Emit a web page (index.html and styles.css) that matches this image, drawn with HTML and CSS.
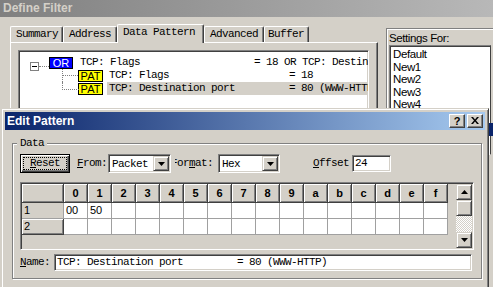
FILE: index.html
```html
<!DOCTYPE html>
<html>
<head>
<meta charset="utf-8">
<title>Define Filter</title>
<link rel="stylesheet" href="styles.css">
</head>
<body>
<div class="win">
  <div class="wtitle">Define Filter</div>
  <div class="wbody">
    <div class="tabarea">
      <div class="tabs">
        <div class="tab t-sum">Summary</div>
        <div class="tab t-addr">Address</div>
        <div class="tab t-data sel">Data Pattern</div>
        <div class="tab t-adv">Advanced</div>
        <div class="tab t-buf">Buffer</div>
      </div>
      <div class="panel">
        <div class="tree">
          <div class="trow r1"><span class="minus"></span><span class="dots"></span><span class="tag or">OR</span><span class="txt">TCP: Flags                   = 18 OR TCP: Destination port</span></div>
          <div class="trow r2"><span class="tag pat">PAT</span><span class="txt">TCP: Flags                    = 18</span></div>
          <div class="trow r3"><span class="tag pat">PAT</span><span class="txt hl">TCP: Destination port         = 80 (WWW-HTTP)</span></div>
        </div>
      </div>
    </div>
    <div class="settings">
      <div class="slabel">Settings For:</div>
      <div class="list">
        <div class="item">Default</div>
        <div class="item">New1</div>
        <div class="item">New2</div>
        <div class="item">New3</div>
        <div class="item">New4</div>
        <div class="item">New5</div>
        <div class="item selitem">New6</div>
      </div>
    </div>
  </div>
</div>

<div class="dialog">
  <div class="dtitle">
    <span class="dtext">Edit Pattern</span>
    <span class="cbtn help">?</span>
    <span class="cbtn close"><svg width="8" height="7" viewBox="0 0 8 7"><path d="M0 0h2l2 2.5L6 0h2L5 3.5 8 7H6L4 4.5 2 7H0l3-3.5z" fill="#000"/></svg></span>
  </div>
  <fieldset class="group">
    <legend>Data</legend>
    <div class="ctrls">
      <div class="btn-reset"><span class="focus"><u>R</u>eset</span></div>
      <span class="lbl l-from"><u>F</u>rom:</span>
      <div class="combo c-packet"><span class="ctext">Packet</span><span class="dd"><svg width="7" height="4" viewBox="0 0 7 4"><path d="M0 0h7L3.5 4z" fill="#000"/></svg></span></div>
      <span class="lbl l-format"><span class="clip">For<u>m</u>at:</span></span>
      <div class="combo c-hex"><span class="ctext">Hex</span><span class="dd"><svg width="7" height="4" viewBox="0 0 7 4"><path d="M0 0h7L3.5 4z" fill="#000"/></svg></span></div>
      <span class="lbl l-offset"><u>O</u>ffset</span>
      <div class="edit e-offset">24</div>
    </div>
    <div class="grid">
      <div class="cells">
        <div class="hc corner"></div>
        <div class="hc">0</div><div class="hc">1</div><div class="hc">2</div><div class="hc">3</div>
        <div class="hc">4</div><div class="hc">5</div><div class="hc">6</div><div class="hc">7</div>
        <div class="hc">8</div><div class="hc">9</div><div class="hc">a</div><div class="hc">b</div>
        <div class="hc">c</div><div class="hc">d</div><div class="hc">e</div><div class="hc">f</div>

        <div class="rh cur">1</div>
        <div class="dc">00</div><div class="dc">50</div><div class="dc"></div><div class="dc"></div>
        <div class="dc"></div><div class="dc"></div><div class="dc"></div><div class="dc"></div>
        <div class="dc"></div><div class="dc"></div><div class="dc"></div><div class="dc"></div>
        <div class="dc"></div><div class="dc"></div><div class="dc"></div><div class="dc"></div>

        <div class="rh">2</div>
        <div class="dc"></div><div class="dc"></div><div class="dc"></div><div class="dc"></div>
        <div class="dc"></div><div class="dc"></div><div class="dc"></div><div class="dc"></div>
        <div class="dc"></div><div class="dc"></div><div class="dc"></div><div class="dc"></div>
        <div class="dc"></div><div class="dc"></div><div class="dc"></div><div class="dc"></div>
      </div>
      <div class="gfill"></div>
      <div class="vscroll">
        <div class="sbtn"><svg width="7" height="4" viewBox="0 0 7 4"><path d="M0 4h7L3.5 0z" fill="#000"/></svg></div>
        <div class="sthumb"></div>
        <div class="strack"></div>
        <div class="sbtn"><svg width="7" height="4" viewBox="0 0 7 4"><path d="M0 0h7L3.5 4z" fill="#000"/></svg></div>
      </div>
    </div>
    <div class="namerow">
      <span class="lbl l-name"><u>N</u>ame:</span>
      <div class="edit e-name">TCP: Destination port         = 80 (WWW-HTTP)</div>
    </div>
  </fieldset>
</div>
</body>
</html>
```

FILE: styles.css
```css
* { box-sizing: border-box; }
html, body { margin: 0; padding: 0; }
body {
  width: 493px;
  height: 287px;
  overflow: hidden;
  position: relative;
  background: #d4d0c8;
  font-family: "Liberation Mono", monospace;
  font-size: 11px;
  letter-spacing: -0.6px;
  color: #000;
}
u { text-decoration: underline; text-underline-offset: 1px; }

/* background window */
.win { height: 287px; display: flex; flex-direction: column; }
.wtitle {
  height: 17px; flex: none;
  background: linear-gradient(to right, #808080, #b8b8b8);
  color: #d4d0c8;
  font: bold 12px/17px "Liberation Sans", sans-serif;
  letter-spacing: 0;
  padding-left: 3px;
}
.wbody { display: flex; flex: 1; padding-left: 10px; }
.tabarea { width: 368px; flex: none; display: flex; flex-direction: column; padding-top: 7px; }
.tabs { display: flex; align-items: flex-end; height: 18px; position: relative; z-index: 1; }
.tab {
  height: 16px;
  border: 1px solid;
  border-color: #fff #404040 transparent #fff;
  border-bottom: none;
  border-radius: 2px 2px 0 0;
  box-shadow: inset -1px 0 #808080;
  background: #d4d0c8;
  line-height: 14px;
  white-space: pre;
}
.t-sum { padding: 0 4px 0 5px; }
.t-addr { padding: 0 5px 0 5px; }
.t-data { padding: 0 8px 0 5px; }
.t-adv { padding: 0 5px 0 5px; }
.t-buf { padding: 0 4px 0 3px; }
.tab.sel { height: 19px; margin-bottom: -1px; }

.panel {
  flex: 1;
  border-top: 1px solid #fff;
  border-left: 1px solid #fff;
  border-right: 1px solid #404040;
  box-shadow: inset -1px 0 #808080;
  padding: 7px 0 0 7px;
}
.tree {
  width: 351px;
  height: 90px;
  background: #fff;
  border: 1px solid;
  border-color: #808080 #fff #fff #808080;
  box-shadow: inset 1px 1px #404040, inset -1px -1px #d4d0c8;
  padding: 5px 0 0 11px;
  overflow: hidden;
}
.trow { display: flex; height: 13px; line-height: 13px; white-space: pre; position: relative; }
.minus {
  width: 9px; height: 9px; margin-top: 6px; flex: none;
  border: 1px solid #808080; background: #fff; position: relative;
}
.minus::after { content: ""; position: absolute; left: 1px; top: 3px; width: 5px; height: 1px; background: #000; }
.dots { width: 10px; height: 0; margin-top: 10px; border-top: 1px dotted #808080; flex: none; }
.tag {
  flex: none; height: 12px; margin-top: 1px;
  border: 1px solid #000;
  font: 11px/10px "Liberation Sans", sans-serif;
  letter-spacing: 0;
  text-align: center;
}
.or { width: 24px; background: #0000ff; color: #fff; }
.pat { width: 25px; background: #ffff00; color: #000; }
.r1 .txt { margin-left: 7px; }
.r2, .r3 { padding-left: 48px; }
.r2 .txt { margin-left: 6px; }
.r3 .txt { margin-left: 4px; padding-left: 2px; flex: 1; }
.hl { background: #d4d0c8; }
.r2::before {
  content: ""; position: absolute; left: 32px; top: 0; height: 13px;
  border-left: 1px dotted #808080;
}
.r2::after {
  content: ""; position: absolute; left: 33px; top: 6px; width: 15px;
  border-top: 1px dotted #808080;
}
.r3::before {
  content: ""; position: absolute; left: 32px; top: 0; height: 7px; width: 16px;
  border-left: 1px dotted #808080; border-bottom: 1px dotted #808080;
}

.settings {
  flex: 1;
  margin: 11px 0 0 8px;
  border-top: 1px solid #808080;
  border-left: 1px solid #808080;
  box-shadow: inset 1px 1px #fff;
  padding: 2px 0 0 2px;
  font-family: "Liberation Sans", sans-serif;
  font-size: 11.5px;
  letter-spacing: -0.4px;
}
.slabel { line-height: 14px; height: 14px; white-space: nowrap; }
.list {
  width: 102px;
  height: 110px;
  background: #fff;
  border: 1px solid;
  border-color: #808080 #404040 #fff #808080;
  box-shadow: inset 1px 1px #404040;
  padding: 2px 0 0 2px;
}
.item { line-height: 12.5px; height: 12.5px; padding-left: 1px; white-space: nowrap; }
.selitem { background: #0a246a; color: #fff; width: 110px; }

/* dialog */
.dialog {
  position: absolute;
  left: 1px; top: 108px;
  width: 488px; height: 190px;
  background: #d4d0c8;
  border: 1px solid;
  border-color: #d4d0c8 #404040 #404040 #d4d0c8;
  box-shadow: inset 1px 1px #fff, inset -1px -1px #808080;
  padding: 3px;
  display: flex; flex-direction: column;
}
.dtitle {
  height: 18px; flex: none;
  background: linear-gradient(to right, #0a246a, #a6caf0);
  display: flex; align-items: center;
  padding: 0 2px;
  color: #fff;
  font: bold 12px "Liberation Sans", sans-serif;
  letter-spacing: 0;
}
.dtext { flex: 1; }
.cbtn {
  width: 16px; height: 14px; margin-left: 2px;
  background: #d4d0c8;
  border: 1px solid;
  border-color: #fff #404040 #404040 #fff;
  box-shadow: inset -1px -1px #808080;
  display: flex; align-items: center; justify-content: center;
  color: #000;
  font: bold 11px "Liberation Sans", sans-serif;
}
.close svg { display: block; margin-top: -1px; }

.group {
  margin: 7px 3px 0 7px;
  padding: 0 6px 7px 7px;
  border: 1px solid #808080;
  box-shadow: inset 1px 1px #fff, 1px 1px #fff;
  min-width: 0;
}
.group legend {
  padding: 0 3px;
  margin-left: -3px;
  line-height: 13px;
  background: #d4d0c8;
}
.ctrls { display: flex; align-items: center; height: 19px; margin-top: 4px; white-space: pre; }
.btn-reset {
  width: 50px; height: 19px; flex: none;
  border: 1px solid #000;
  box-shadow: inset 1px 1px #fff, inset -1px -1px #404040, inset -2px -2px #808080;
  padding: 2px;
  display: flex;
}
.focus {
  flex: 1;
  border: 1px dotted #000;
  display: flex; align-items: center; justify-content: center;
  line-height: 11px;
}
.lbl { flex: none; line-height: 13px; }
.l-from { margin-left: 7px; width: 30px; }
.combo {
  height: 19px; flex: none;
  background: #fff;
  border: 1px solid;
  border-color: #808080 #fff #fff #808080;
  box-shadow: inset 1px 1px #404040, inset -1px -1px #d4d0c8;
  padding: 1px;
  display: flex; align-items: stretch;
}
.ctext { flex: 1; padding-left: 2px; line-height: 15px; margin-top: 1px; }
.dd {
  width: 16px; flex: none;
  background: #d4d0c8;
  border: 1px solid;
  border-color: #d4d0c8 #404040 #404040 #d4d0c8;
  box-shadow: inset 1px 1px #fff, inset -1px -1px #808080;
  display: flex; align-items: center; justify-content: center;
}
.dd svg { display: block; }
.c-packet { margin-left: 1px; width: 63px; }
.l-format { margin-left: 4px; width: 38px; overflow: hidden; }
.clip { display: block; margin-left: -4px; }
.c-hex { margin-left: 5px; width: 62px; }
.l-offset { margin-left: 33px; width: 36px; }
.edit {
  height: 17px; flex: none;
  background: #fff;
  border: 1px solid;
  border-color: #808080 #fff #fff #808080;
  box-shadow: inset 1px 1px #404040, inset -1px -1px #d4d0c8;
  padding-left: 2px;
  line-height: 15px;
  white-space: pre;
  overflow: hidden;
}
.e-offset { margin-left: 3px; width: 39px; }

.grid {
  width: 454px; height: 68px;
  margin-top: 9px;
  border: 1px solid;
  border-color: #808080 #fff #fff #808080;
  box-shadow: inset 1px 1px #404040, inset -1px -1px #d4d0c8;
  padding: 1px;
  display: flex;
}
.cells {
  display: grid;
  grid-template-columns: 42px repeat(16, 24px);
  grid-template-rows: 19px 16px 16px;
  align-content: start;
  font-family: "Liberation Sans", sans-serif;
  letter-spacing: 0;
}
.hc {
  background: #d4d0c8;
  border-right: 1px solid #404040;
  border-bottom: 1px solid #404040;
  box-shadow: inset 1px 1px #fff, inset -1px -1px #808080;
  font-weight: bold;
  font-size: 11px;
  display: flex; align-items: center; justify-content: center;
}
.rh {
  background: #d4d0c8;
  border-right: 1px solid #404040;
  border-bottom: 1px solid #404040;
  box-shadow: inset 1px 1px #fff, inset -1px -1px #808080;
  font-size: 11px;
  line-height: 15px;
  padding-left: 2px;
}
.rh.cur {
  box-shadow: none;
  border-right-color: #a0a0a0;
  border-bottom-color: #a0a0a0;
}
.dc {
  background: #fff;
  border-right: 1px solid #a0a0a0;
  border-bottom: 1px solid #a0a0a0;
  font-size: 11px;
  line-height: 15px;
  padding-left: 2px;
}
.gfill { flex: 1; }
.vscroll { width: 16px; flex: none; display: flex; flex-direction: column; }
.sbtn, .sthumb {
  height: 16px; flex: none;
  background: #d4d0c8;
  border: 1px solid;
  border-color: #d4d0c8 #404040 #404040 #d4d0c8;
  box-shadow: inset 1px 1px #fff, inset -1px -1px #808080;
  display: flex; align-items: center; justify-content: center;
}
.sbtn svg { display: block; }
.strack {
  flex: 1;
  background: repeating-conic-gradient(#fff 0 25%, #d4d0c8 0 50%) 0 0 / 2px 2px;
}

.namerow { display: flex; align-items: center; height: 17px; margin-top: 4px; }
.l-name { width: 30px; }
.e-name { margin-left: 4px; width: 418px; }
```
